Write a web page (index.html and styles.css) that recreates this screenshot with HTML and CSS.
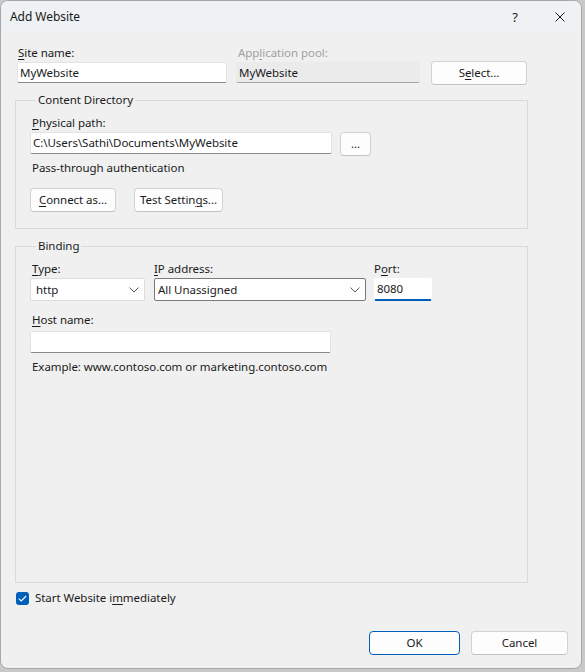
FILE: index.html
```html
<!DOCTYPE html>
<html>
<head>
<meta charset="utf-8">
<title>Add Website</title>
<link rel="stylesheet" href="styles.css">
</head>
<body>
<div class="window">
  <div class="titlebar">
    <span class="title">Add Website</span>
    <span class="tb-help">?</span>
    <span class="tb-close">
      <svg width="10" height="10" viewBox="0 0 10 10"><path d="M0.5 0.5L9.5 9.5M9.5 0.5L0.5 9.5" stroke="#1a1a1a" stroke-width="1"/></svg>
    </span>
  </div>
  <div class="content">
    <div class="toprow">
      <div class="field f-site">
        <label class="lbl"><u>S</u>ite name:</label>
        <div class="input">MyWebsite</div>
      </div>
      <div class="field f-pool">
        <label class="lbl disabled">App<u>l</u>ication pool:</label>
        <div class="input readonly">MyWebsite</div>
      </div>
      <button class="btn btn-select">S<u>e</u>lect...</button>
    </div>

    <fieldset class="group g-content">
      <legend>Content Directory</legend>
      <label class="lbl"><u>P</u>hysical path:</label>
      <div class="pathrow">
        <div class="input i-path">C:\Users\Sathi\Documents\MyWebsite</div>
        <button class="btn btn-browse">...</button>
      </div>
      <div class="text t-pass">Pass-through authentication</div>
      <div class="btnrow">
        <button class="btn btn-connect"><u>C</u>onnect as...</button>
        <button class="btn btn-test">Test Settin<u>g</u>s...</button>
      </div>
    </fieldset>

    <fieldset class="group g-binding">
      <legend>Binding</legend>
      <div class="bindrow">
        <div class="field f-type">
          <label class="lbl"><u>T</u>ype:</label>
          <div class="select s-type">http
            <svg class="chev" width="10" height="6" viewBox="0 0 10 6"><path d="M0.5 0.5L5 5L9.5 0.5" fill="none" stroke="#5c5c5c" stroke-width="1"/></svg>
          </div>
        </div>
        <div class="field f-ip">
          <label class="lbl"><u>I</u>P address:</label>
          <div class="select s-ip">All Unassigned
            <svg class="chev" width="10" height="6" viewBox="0 0 10 6"><path d="M0.5 0.5L5 5L9.5 0.5" fill="none" stroke="#5c5c5c" stroke-width="1"/></svg>
          </div>
        </div>
        <div class="field f-port">
          <label class="lbl">P<u>o</u>rt:</label>
          <div class="input i-port">8080</div>
        </div>
      </div>
      <label class="lbl l-host"><u>H</u>ost name:</label>
      <div class="input i-host"></div>
      <div class="text t-example">Example: www.contoso.com or marketing.contoso.com</div>
    </fieldset>

    <div class="checkrow">
      <span class="checkbox">
        <svg width="9" height="7" viewBox="0 0 9 7"><path d="M0.8 3.6L3.2 6L8.2 1" fill="none" stroke="#ffffff" stroke-width="1.1"/></svg>
      </span>
      <span class="text">Start Website i<u>m</u>mediately</span>
    </div>

    <div class="footer">
      <button class="btn btn-ok">OK</button>
      <button class="btn btn-cancel">Cancel</button>
    </div>
  </div>
</div>
</body>
</html>
```

FILE: styles.css
```css
* { box-sizing: border-box; }
html, body { margin: 0; padding: 0; }
body {
  background: #c9c9c9;
  width: 585px;
  height: 672px;
  overflow: hidden;
  font-family: "Noto Sans", "Open Sans", sans-serif;
  font-size: 11.5px;
  letter-spacing: -0.05px;
  color: #1a1a1a;
}
u { text-decoration: underline; text-underline-offset: 2px; text-decoration-thickness: 1px; }

.window {
  width: 582px;
  height: 669px;
  background: #f0f0f0;
  border: 1px solid #a8a8a8;
  border-radius: 8px;
  overflow: hidden;
}
.titlebar {
  height: 31px;
  background: #eef2f4;
  display: flex;
  align-items: center;
  padding-left: 9px;
}
.title { font-size: 12px; flex: 1; }
.tb-help { width: 20px; margin-right: 30px; text-align: center; font-size: 13px; }
.tb-close { width: 10px; height: 10px; margin-right: 16px; display: flex; }

.content { padding: 13px 13px 0 14px; }

.lbl { display: block; line-height: 16px; height: 16px; white-space: nowrap; }
.lbl.disabled { color: #a0a0a0; }
.text { line-height: 16px; white-space: nowrap; }

.input {
  height: 21px;
  background: #ffffff;
  border: 1px solid #e3e3e3;
  border-bottom-color: #8a8a8a;
  border-radius: 2px;
  padding: 0 0 0 2px;
  line-height: 19px;
  white-space: nowrap;
}
.input.readonly { background: #ebebeb; border-color: #ebebeb; border-bottom-color: #a8a8a8; }

.btn {
  font-family: inherit;
  font-size: 11.5px;
  letter-spacing: -0.05px;
  color: #1a1a1a;
  background: #fdfdfd;
  border: 1px solid #d2d2d2;
  border-bottom-color: #c2c2c2;
  border-radius: 4px;
  height: 24px;
  padding: 0;
  line-height: 20px;
}

.toprow { display: flex; align-items: flex-end; padding-left: 2px; }
.toprow .lbl { margin-bottom: 3px; padding-left: 1px; }
.f-site { width: 210px; }
.f-pool { width: 184px; margin-left: 9px; }
.f-pool .lbl { padding-left: 2px; }
.btn-select { width: 96px; margin-left: 11px; margin-bottom: -2px; }

.group {
  border: 1px solid #dadada;
  margin: 0;
  width: 513px;
  padding: 0 0 0 14px;
}
.group legend { padding: 0 2px; margin-left: 6px; line-height: 16px; }
.g-content { margin-top: 9px; height: 137px; padding-top: 7px; }
.g-content .lbl { padding-left: 2px; margin-bottom: 1px; }
.pathrow { display: flex; align-items: flex-start; }
.i-path { width: 302px; height: 22px; line-height: 20px; }
.btn-browse { width: 31px; margin-left: 8px; line-height: 16px; }
.t-pass { margin-top: 4px; padding-left: 2px; }
.btnrow { display: flex; margin-top: 12px; }
.btn-connect { width: 86px; }
.btn-test { width: 89px; margin-left: 18px; }

.g-binding { margin-top: 9px; height: 345px; padding-top: 7px; }
.bindrow { display: flex; }
.field .lbl { margin-bottom: 1px; }
.f-type .lbl, .f-ip .lbl { padding-left: 2px; }
.f-type { width: 115px; }
.f-ip { width: 212px; margin-left: 9px; }
.f-ip .lbl { padding-left: 0; }
.f-port { width: 58px; margin-left: 8px; }
.f-port .lbl { padding-left: 0; }
.select {
  position: relative;
  height: 23px;
  background: #ffffff;
  border: 1px solid #dcdcdc;
  border-radius: 2px;
  padding-left: 5px;
  line-height: 21px;
}
.s-ip { border-color: #7a7a7a; padding-left: 3px; }
.chev { position: absolute; right: 5px; top: 8px; }
.i-port { height: 23px; border: 1px solid #ffffff; border-bottom: 2px solid #005fb8; line-height: 20px; padding-left: 2px; }
.l-host { margin-top: 11px; padding-left: 2px; margin-bottom: 3px; }
.i-host { width: 301px; height: 22px; }
.t-example { margin-top: 6px; padding-left: 2px; }

.checkrow { display: flex; align-items: center; margin-top: 7px; padding-left: 1px; height: 16px; }
.checkbox {
  width: 13px; height: 13px;
  background: #005fb8;
  border-radius: 3px;
  display: flex; align-items: center; justify-content: center;
  margin-right: 6px;
}
.footer { display: flex; justify-content: flex-end; margin-top: 25px; padding-right: 0; }
.btn-ok { width: 91px; border-color: #005fb8; }
.btn-cancel { width: 97px; margin-left: 11px; }
```
